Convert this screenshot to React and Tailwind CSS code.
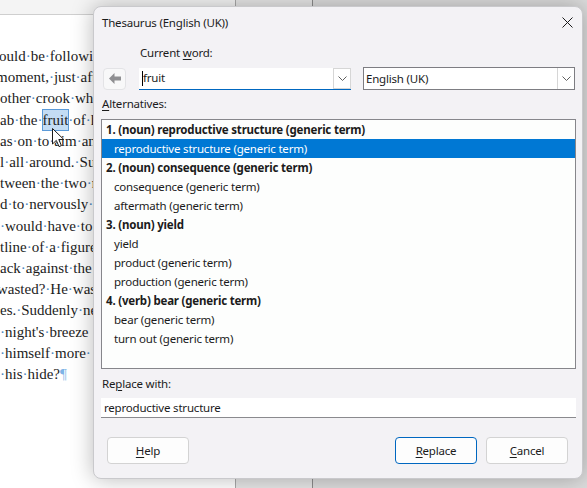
import React from 'react';

const docLines = [
  { text: 'ould be following him. At that', ml: '-ml-[1px]' },
  { text: 'moment, just after the', ml: '-ml-[4px]' },
  { text: 'other crook who had', ml: '' },
  { text: 'ab the FRUIT of his', ml: '' },
  { text: 'as on to aim and', ml: '' },
  { text: 'l all around. Suddenly', ml: '' },
  { text: 'tween the two men', ml: '' },
  { text: 'd to nervously look', ml: '' },
  { text: ' would have to go', ml: '' },
  { text: 'tline of a figure', ml: '' },
  { text: 'ack against the wall', ml: '' },
  { text: 'wasted? He was', ml: '-ml-[3px]' },
  { text: 'es. Suddenly next', ml: '' },
  { text: ' night\'s breeze', ml: '' },
  { text: ' himself more ', ml: '' },
  { text: ' his hide?', ml: '', end: true },
];

// render spaces as formatting-mark dots
const DocLine = ({ text, ml, end }) => {
  const words = text.split(' ');
  return (
    <div className={`whitespace-nowrap ${ml}`}>
      {words.map((w, i) => (
        <React.Fragment key={i}>
          {i > 0 && <span className="text-[#4a86c0]">·</span>}
          {w === 'FRUIT' ? (
            <span className="inline-block leading-[20px] bg-[#c3dcf4] outline outline-1 outline-[#5a9ad8]">fruit</span>
          ) : (
            w
          )}
        </React.Fragment>
      ))}
      {end && <span className="text-[#7db4e6]">¶</span>}
    </div>
  );
};

const Chevron = () => (
  <svg width="9" height="5" viewBox="0 0 9 5" fill="none">
    <path d="M0.5 0.5 L4.5 4.5 L8.5 0.5" stroke="#5f5f5f" strokeWidth="1" />
  </svg>
);

const rows = [
  { label: '1. (noun) reproductive structure (generic term)', head: true },
  { label: 'reproductive structure (generic term)', selected: true },
  { label: '2. (noun) consequence (generic term)', head: true },
  { label: 'consequence (generic term)' },
  { label: 'aftermath (generic term)' },
  { label: '3. (noun) yield', head: true },
  { label: 'yield' },
  { label: 'product (generic term)' },
  { label: 'production (generic term)' },
  { label: '4. (verb) bear (generic term)', head: true },
  { label: 'bear (generic term)' },
  { label: 'turn out (generic term)' },
];

const DlgButton = ({ children, primary }) => (
  <button
    className={`w-[82px] h-[27px] rounded-[4px] bg-[#fdfdfd] text-[11.5px] tracking-[-0.2px] text-[#1b1b1b] border ${
      primary ? 'border-[#0067c0]' : 'border-[#d3d3d3]'
    }`}
  >
    {children}
  </button>
);

const App = () => {
  return (
    <div className="relative w-[587px] h-[488px] overflow-hidden bg-white">
      {/* background: document and window columns */}
      <div className="flex h-full">
        <div className="w-[235px] h-full bg-white">
          <div className="h-[15px] bg-[#f4f4f4] border-b border-[#cfcfcf]" />
          <div className="pt-[31px] font-['Liberation_Serif',serif] text-[15px] leading-[21.2px] text-[#1c1c1c]">
            {docLines.map((l, i) => (
              <DocLine key={i} {...l} />
            ))}
          </div>
        </div>
        <div className="w-[77px] h-full bg-[#e6e6e6] border-l border-[#a9a9a9]" />
        <div className="flex-1 h-full bg-[#dcdcdc] border-l border-[#8c8c8c]" />
      </div>

      {/* mouse pointer */}
      <svg className="absolute left-[52px] top-[128px]" width="13" height="20" viewBox="0 0 13 20">
        <path d="M0.5 0.5 L0.5 16 L4.3 12.4 L7 18.6 L9.4 17.6 L6.8 11.5 L11.8 11.5 Z" fill="#ffffff" stroke="#1a1a1a" strokeWidth="1" />
      </svg>

      {/* thesaurus dialog */}
      <div className="absolute left-[93px] top-[6px] w-[490px] h-[473px] rounded-[8px] bg-[#f3f2f5] border border-[#c9c9cc] shadow-[0_0_22px_rgba(0,0,0,0.28)] font-['Noto_Sans',sans-serif] text-[11.5px] tracking-[-0.2px] text-[#1b1b1b] flex flex-col">
        <div className="h-[31px] flex items-center justify-between pl-[8px] pr-[9px]">
          <span>Thesaurus (English (UK))</span>
          <svg width="11" height="11" viewBox="0 0 11 11">
            <path d="M0.5 0.5 L10.5 10.5 M10.5 0.5 L0.5 10.5" stroke="#1b1b1b" strokeWidth="1" />
          </svg>
        </div>

        <div className="mt-[7px] pl-[46px] leading-[16px]">
          Current <u className="underline-offset-2">w</u>ord:
        </div>

        <div className="mt-[6px] flex items-center pl-[9px]">
          <div className="w-[23px] h-[22px] rounded-[4px] bg-[#f8f8f9] border border-[#e3e3e6] flex items-center justify-center">
            <svg width="12" height="11" viewBox="0 0 12 11">
              <path d="M0 5.5 L5.5 0 L5.5 3.5 L12 3.5 L12 7.5 L5.5 7.5 L5.5 11 Z" fill="#8f8f92" />
            </svg>
          </div>
          <div className="ml-[13px] w-[212px] h-[22px] bg-white border-b border-[#0067c0] flex items-center">
            <div className="flex-1 flex items-center pl-[3px]">
              <span className="w-px h-[15px] bg-black" />
              <span>fruit</span>
            </div>
            <div className="w-[18px] h-[21px] border border-[#d6d6d6] bg-white flex items-center justify-center">
              <Chevron />
            </div>
          </div>
          <div className="ml-[12px] w-[212px] h-[23px] bg-white border border-[#7d7d82] flex items-center">
            <span className="flex-1 pl-[2px]">English (UK)</span>
            <div className="w-[17px] h-[21px] border-l border-[#d6d6d6] flex items-center justify-center">
              <Chevron />
            </div>
          </div>
        </div>

        <div className="mt-[6px] pl-[8px] leading-[16px]">
          <u className="underline-offset-2">A</u>lternatives:
        </div>

        <div className="mt-[7px] ml-[7px] w-[475px] h-[250px] bg-[#fdfefd] border border-[#86868b]">
          {rows.map((r, i) => (
            <div
              key={i}
              className={`h-[19px] flex items-center whitespace-nowrap ${r.head ? 'pl-[4px] font-bold' : 'pl-[12px]'} ${
                r.selected ? 'bg-[#0078d4] text-white' : ''
              }`}
            >
              {r.label}
            </div>
          ))}
        </div>

        <div className="mt-[7px] pl-[8px] leading-[16px]">
          Re<u className="underline-offset-2">p</u>lace with:
        </div>

        <div className="mt-[6px] ml-[7px] w-[475px] h-[20px] bg-white border-b border-[#8a8a8e] flex items-center pl-[3px]">
          reproductive structure
        </div>

        <div className="mt-[19px] flex items-center pl-[13px]">
          <DlgButton>
            <u className="underline-offset-2">H</u>elp
          </DlgButton>
          <div className="flex-1" />
          <DlgButton primary>
            <u className="underline-offset-2">R</u>eplace
          </DlgButton>
          <div className="w-[9px]" />
          <DlgButton>
            <u className="underline-offset-2">C</u>ancel
          </DlgButton>
          <div className="w-[14px]" />
        </div>
      </div>
    </div>
  );
};

export default App;
